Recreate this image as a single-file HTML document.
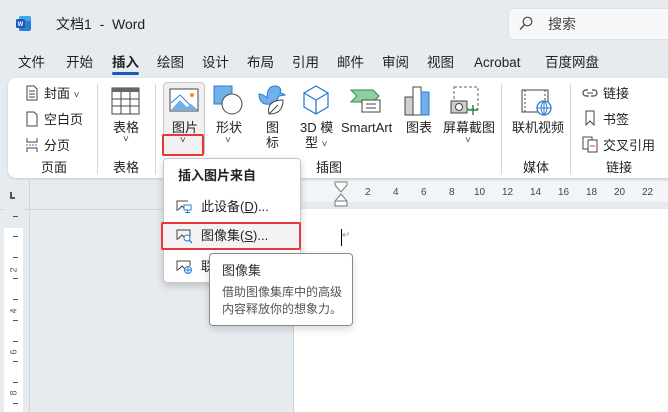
<!DOCTYPE html>
<html><head><meta charset="utf-8"><style>
*{margin:0;padding:0;box-sizing:border-box}
body{width:668px;height:412px;overflow:hidden;background:#e6ebef;font-family:"Liberation Sans","Noto Sans CJK SC",sans-serif;color:#222;position:relative}
.a{position:absolute;white-space:nowrap}
.t{font-size:13px;line-height:16px}
.tab{position:absolute;top:54px;font-size:13.5px;line-height:18px;color:#222}
.chev{font-size:10px;color:#444}
.sep{position:absolute;top:84px;width:1px;height:90px;background:#d6d6d6}
</style></head><body>
<!-- title bar -->
<svg class="a" style="left:15px;top:15px" width="17" height="17" viewBox="0 0 17 17"><rect x="4" y="1" width="12" height="15" rx="2" fill="#2b7cd3"/><rect x="4" y="1" width="12" height="5" rx="2" fill="#41a5ee"/><rect x="1" y="4" width="9" height="9" rx="1.5" fill="#185abd"/><text x="5.5" y="11" font-size="6" fill="#fff" text-anchor="middle" font-family="Liberation Sans" font-weight="bold">W</text></svg>
<div class="a" style="left:56px;top:15px;font-size:14px;line-height:18px">文档1 &nbsp;-&nbsp; Word</div>
<div class="a" style="left:508px;top:8px;width:170px;height:32px;background:#f6f8fa;border:1px solid #dde2e6;border-radius:5px"></div>
<svg class="a" style="left:519px;top:16px" width="14" height="15" viewBox="0 0 14 15"><circle cx="8.5" cy="5.5" r="4.3" fill="none" stroke="#444" stroke-width="1.2"/><line x1="5.5" y1="8.7" x2="1" y2="13.5" stroke="#444" stroke-width="1.3"/></svg>
<div class="a" style="left:548px;top:14px;font-size:14px;color:#444">搜索</div>
<!-- tabs -->
<div class="tab" style="left:18px">文件</div>
<div class="tab" style="left:66px">开始</div>
<div class="tab" style="left:112px;font-weight:bold">插入</div>
<div class="a" style="left:112px;top:72px;width:27px;height:3px;background:#185abd;border-radius:2px"></div>
<div class="tab" style="left:157px">绘图</div>
<div class="tab" style="left:202px">设计</div>
<div class="tab" style="left:247px">布局</div>
<div class="tab" style="left:292px">引用</div>
<div class="tab" style="left:337px">邮件</div>
<div class="tab" style="left:382px">审阅</div>
<div class="tab" style="left:427px">视图</div>
<div class="tab" style="left:474px">Acrobat</div>
<div class="tab" style="left:545px">百度网盘</div>
<!-- ribbon -->
<div class="a" style="left:8px;top:78px;width:670px;height:100px;background:#fff;border-radius:8px;box-shadow:0 1px 2px rgba(0,0,0,.15)"></div>
<div class="sep" style="left:97px"></div><div class="sep" style="left:155px"></div><div class="sep" style="left:501px"></div><div class="sep" style="left:570px"></div>
<!-- 页面 -->
<svg class="a" style="left:26px;top:85px" width="12" height="16"><path d="M1 1h7l3 3v11H1z" fill="none" stroke="#444"/><path d="M3 6h6M3 9h6M3 12h6" stroke="#444"/></svg>
<div class="a t" style="left:44px;top:86px">封面 <span class="chev">˅</span></div>
<svg class="a" style="left:26px;top:111px" width="12" height="16"><path d="M1 1h7l3 3v11H1z" fill="none" stroke="#444"/></svg>
<div class="a t" style="left:44px;top:112px">空白页</div>
<svg class="a" style="left:25px;top:137px" width="14" height="16"><path d="M2 1v4h10V1M2 15v-4h10v4" fill="none" stroke="#444"/><path d="M1 8h12" stroke="#2b7cd3" stroke-dasharray="2 1"/></svg>
<div class="a t" style="left:44px;top:138px">分页</div>
<div class="a t" style="left:41px;top:160px">页面</div>
<!-- 表格 -->
<svg class="a" style="left:111px;top:87px" width="29" height="28"><rect x="1" y="1" width="27" height="26" fill="none" stroke="#444"/><rect x="1" y="1" width="27" height="4" fill="#666"/><path d="M10 5v22M19 5v22M1 12h27M1 19h27" stroke="#444"/></svg>
<div class="a t" style="left:113px;top:120px">表格</div>
<div class="a chev" style="left:123px;top:134px">˅</div>
<div class="a t" style="left:113px;top:160px">表格</div>
<!-- 图片 -->
<div class="a" style="left:163px;top:82px;width:42px;height:74px;background:#f0f0f0;border:1px solid #c8c8c8;border-radius:4px"></div>
<div class="a" style="left:162px;top:134px;width:42px;height:22px;border:2px solid #e8363a;border-radius:2px"></div>
<svg class="a" style="left:169px;top:88px" width="30" height="24"><rect x="1" y="1" width="28" height="22" fill="#fff" stroke="#444"/><path d="M2 22l9-10 7 7 4-3 7 6z" fill="#6fb0ea"/><path d="M2 15l9-8 10 10" fill="none" stroke="#2b7cd3"/><circle cx="23" cy="7" r="2" fill="#f08a24"/></svg>
<div class="a t" style="left:172px;top:120px">图片</div>
<div class="a chev" style="left:180px;top:135px">˅</div>
<!-- 形状 -->
<svg class="a" style="left:213px;top:85px" width="30" height="30"><rect x="1" y="1" width="18" height="18" fill="#6fb0ea" stroke="#2b7cd3"/><circle cx="19" cy="19" r="10" fill="#fff" stroke="#444"/></svg>
<div class="a t" style="left:216px;top:120px">形状</div>
<div class="a chev" style="left:225px;top:135px">˅</div>
<!-- 图标 -->
<svg class="a" style="left:257px;top:84px" width="30" height="32"><path d="M2 10c4 0 6 2 8 4 0-8 3-12 8-12s7 4 5 7c3 0 4 1 5 2l-6 1c-2 6-8 9-14 8C4 19 2 15 2 10z" fill="#6fb0ea" stroke="#2b7cd3"/><path d="M12 30c-2-8 2-14 14-14 0 10-5 14-14 14z" fill="#fff" stroke="#444"/><path d="M12 30l9-9" stroke="#444"/></svg>
<div class="a t" style="left:266px;top:120px">图</div>
<div class="a t" style="left:266px;top:135px">标</div>
<!-- 3D -->
<svg class="a" style="left:302px;top:85px" width="28" height="30"><path d="M14 1l12 7v14l-12 7-12-7V8z" fill="#fff" stroke="#2b7cd3" stroke-width="1.3"/><path d="M2 8l12 7 12-7M14 15v14" fill="none" stroke="#2b7cd3" stroke-width="1.3"/></svg>
<div class="a t" style="left:300px;top:120px">3D 模</div>
<div class="a t" style="left:305px;top:135px">型 <span class="chev">˅</span></div>
<!-- SmartArt -->
<svg class="a" style="left:350px;top:89px" width="32" height="24"><path d="M1 1h22l6 6-6 6H1l6-6z" fill="#8fd19e" stroke="#2e8b4a"/><rect x="12" y="11" width="18" height="12" fill="#fff" stroke="#444"/><path d="M16 15h10M16 19h10" stroke="#444"/></svg>
<div class="a t" style="left:341px;top:120px">SmartArt</div>
<!-- 图表 -->
<svg class="a" style="left:404px;top:86px" width="26" height="30"><rect x="1" y="11" width="8" height="18" fill="#d0d0d0" stroke="#444"/><rect x="9" y="1" width="8" height="28" fill="#fff" stroke="#444"/><rect x="17" y="6" width="8" height="23" fill="#6fb0ea" stroke="#2b7cd3"/></svg>
<div class="a t" style="left:406px;top:120px">图表</div>
<!-- 屏幕截图 -->
<svg class="a" style="left:450px;top:86px" width="30" height="30"><rect x="4" y="1" width="24" height="22" fill="none" stroke="#666" stroke-dasharray="3 2"/><rect x="1" y="15" width="16" height="12" fill="#ccc" stroke="#444"/><circle cx="9" cy="21" r="3.5" fill="#fff" stroke="#444"/><path d="M23 19v10M18 24h10" stroke="#2e8b4a" stroke-width="1.5"/></svg>
<div class="a t" style="left:443px;top:120px">屏幕截图</div>
<div class="a chev" style="left:465px;top:135px">˅</div>
<!-- 联机视频 -->
<svg class="a" style="left:521px;top:89px" width="32" height="28"><rect x="1" y="1" width="26" height="22" fill="#fff" stroke="#444"/><path d="M4 1v22M24 1v22" stroke="#444" stroke-dasharray="2 2"/><circle cx="23" cy="19" r="7" fill="#fff" stroke="#2b7cd3" stroke-width="1.3"/><path d="M16 19h14M23 12v14M23 12c-4 4-4 10 0 14M23 12c4 4 4 10 0 14" fill="none" stroke="#2b7cd3"/></svg>
<div class="a t" style="left:512px;top:120px">联机视频</div>
<div class="a t" style="left:523px;top:160px">媒体</div>
<!-- 链接 -->
<svg class="a" style="left:582px;top:87px" width="16" height="12"><path d="M6 3H4a3 3 0 000 6h3M10 3h2a3 3 0 010 6h-3" fill="none" stroke="#444" stroke-width="1.2"/><path d="M5 6h6" stroke="#444"/></svg>
<div class="a t" style="left:603px;top:86px">链接</div>
<svg class="a" style="left:585px;top:110px" width="10" height="16"><path d="M1 1h8v14l-4-4-4 4z" fill="none" stroke="#444"/></svg>
<div class="a t" style="left:603px;top:112px">书签</div>
<svg class="a" style="left:582px;top:136px" width="16" height="17"><rect x="1" y="1" width="9" height="12" fill="#fff" stroke="#444"/><rect x="6" y="4" width="9" height="12" fill="#fff" stroke="#444"/><path d="M8 10h5" stroke="#e8363a"/></svg>
<div class="a t" style="left:603px;top:138px">交叉引用</div>
<div class="a t" style="left:606px;top:160px">链接</div>
<div class="a t" style="left:316px;top:160px">插图</div>
<!-- document area -->
<div class="a" style="left:10px;top:192px;width:5px;height:7px;border-left:2px solid #555;border-bottom:2px solid #555"></div>
<div class="a" style="left:29px;top:180px;width:1px;height:232px;background:#cfd6da"></div>
<div class="a" style="left:0;top:209px;width:293px;height:1px;background:#cfd6da"></div>
<div class="a" style="left:4px;top:228px;width:19px;height:184px;background:#fff"></div>
<div class="a" style="left:4px;top:209px;width:19px;height:19px;background:#e6ebef"></div>
<div class="a" style="left:13px;top:216px;width:5px;height:1px;background:#555"></div>
<div class="a" style="left:13px;top:236px;width:5px;height:1px;background:#555"></div>
<div class="a" style="left:13px;top:257px;width:5px;height:1px;background:#555"></div>
<div class="a" style="left:11px;top:265px;font-size:9px;color:#555;transform:rotate(-90deg)">2</div>
<div class="a" style="left:13px;top:278px;width:5px;height:1px;background:#555"></div>
<div class="a" style="left:13px;top:299px;width:5px;height:1px;background:#555"></div>
<div class="a" style="left:11px;top:306px;font-size:9px;color:#555;transform:rotate(-90deg)">4</div>
<div class="a" style="left:13px;top:320px;width:5px;height:1px;background:#555"></div>
<div class="a" style="left:13px;top:341px;width:5px;height:1px;background:#555"></div>
<div class="a" style="left:11px;top:347px;font-size:9px;color:#555;transform:rotate(-90deg)">6</div>
<div class="a" style="left:13px;top:361px;width:5px;height:1px;background:#555"></div>
<div class="a" style="left:13px;top:382px;width:5px;height:1px;background:#555"></div>
<div class="a" style="left:11px;top:388px;font-size:9px;color:#555;transform:rotate(-90deg)">8</div>
<div class="a" style="left:13px;top:403px;width:5px;height:1px;background:#555"></div>
<div class="a" style="left:302px;top:181px;width:366px;height:21px;background:#f2f5f7"></div>
<div class="a" style="left:293px;top:209px;width:375px;height:203px;background:#fff;border-left:1px solid #c8cfd3"></div>
<svg class="a" style="left:334px;top:181px" width="15" height="29"><path d="M1 1h12v3l-6 7-6-7z M1 25v-5l6-7 6 7v5z M1 20h12" fill="#fff" stroke="#777"/></svg>
<div class="a" style="left:365px;top:187px;font-size:10px;color:#444;word-spacing:0">2</div>
<div class="a" style="left:393px;top:187px;font-size:10px;color:#444">4</div>
<div class="a" style="left:421px;top:187px;font-size:10px;color:#444">6</div>
<div class="a" style="left:449px;top:187px;font-size:10px;color:#444">8</div>
<div class="a" style="left:474px;top:187px;font-size:10px;color:#444">10</div>
<div class="a" style="left:502px;top:187px;font-size:10px;color:#444">12</div>
<div class="a" style="left:530px;top:187px;font-size:10px;color:#444">14</div>
<div class="a" style="left:558px;top:187px;font-size:10px;color:#444">16</div>
<div class="a" style="left:586px;top:187px;font-size:10px;color:#444">18</div>
<div class="a" style="left:614px;top:187px;font-size:10px;color:#444">20</div>
<div class="a" style="left:642px;top:187px;font-size:10px;color:#444">22</div>
<div class="a" style="left:341px;top:229px;width:1px;height:17px;background:#000"></div>
<div class="a" style="left:342px;top:230px;font-size:10px;color:#999">↵</div>
<!-- dropdown -->
<div class="a" style="left:163px;top:158px;width:138px;height:125px;background:#fff;border:1px solid #c6c6c6;border-radius:4px;box-shadow:0 3px 8px rgba(0,0,0,.18)"></div>
<div class="a t" style="left:178px;top:168px;font-weight:bold">插入图片来自</div>
<svg class="a" style="left:176px;top:199px" width="16" height="15"><path d="M1 12V2h11" fill="none" stroke="#444"/><path d="M2 11l4-4 3 3" fill="none" stroke="#444"/><rect x="8" y="6" width="7" height="5" fill="#fff" stroke="#2b7cd3"/><path d="M11.5 11v2M9 13.5h5" stroke="#2b7cd3"/></svg>
<div class="a t" style="left:201px;top:199px">此设备(<u>D</u>)...</div>
<div class="a" style="left:161px;top:222px;width:140px;height:28px;background:#f3f3f3;border:2px solid #e8363a;border-radius:2px"></div>
<svg class="a" style="left:176px;top:228px" width="17" height="16"><path d="M1 12V2h13v6" fill="none" stroke="#444"/><path d="M2 11l4-4 3 3" fill="none" stroke="#444"/><circle cx="11" cy="10" r="3" fill="#fff" stroke="#2b7cd3"/><path d="M13 12l3 3" stroke="#2b7cd3" stroke-width="1.3"/></svg>
<div class="a t" style="left:201px;top:228px">图像集(<u>S</u>)...</div>
<svg class="a" style="left:176px;top:259px" width="17" height="16"><path d="M1 12V2h13v5" fill="none" stroke="#444"/><path d="M2 11l4-4 3 3" fill="none" stroke="#444"/><circle cx="12" cy="11" r="3.5" fill="#fff" stroke="#2b7cd3"/><path d="M8.5 11h7M12 7.5v7" stroke="#2b7cd3"/></svg>
<div class="a t" style="left:201px;top:259px">联机图片(<u>O</u>)...</div>
<!-- tooltip -->
<div class="a" style="left:209px;top:253px;width:144px;height:73px;background:#fff;border:1px solid #8a8a8a;border-radius:4px;box-shadow:0 3px 8px rgba(0,0,0,.15)"></div>
<div class="a t" style="left:222px;top:263px;color:#333">图像集</div>
<div class="a" style="left:222px;top:284px;font-size:12px;line-height:17px;color:#555">借助图像集库中的高级<br>内容释放你的想象力。</div>
</body></html>
